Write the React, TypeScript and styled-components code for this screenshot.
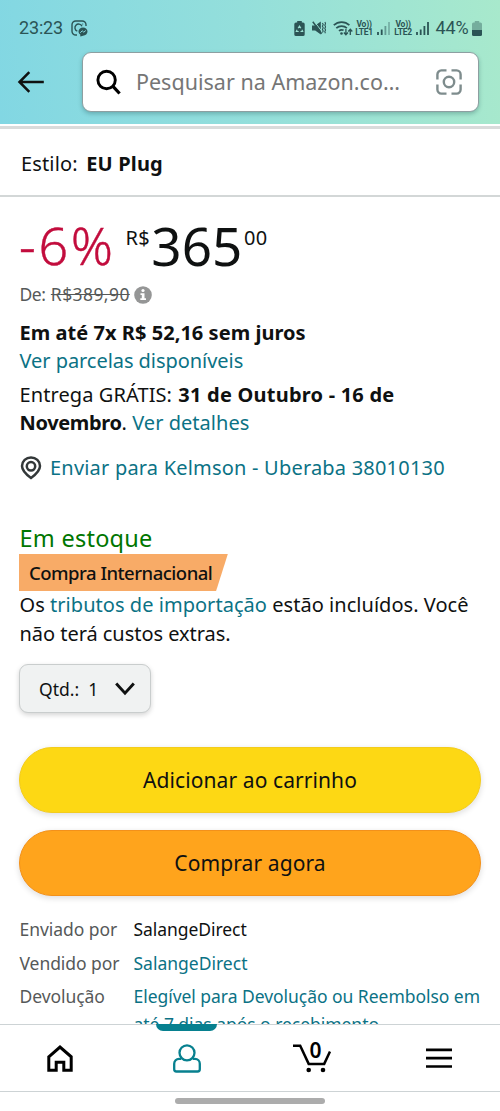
import React from 'react';
import styled, { createGlobalStyle } from 'styled-components';

const Global = createGlobalStyle`
  * { box-sizing: border-box; }
  html, body { margin: 0; background: #fff; }
  body { font-family: "Noto Sans", sans-serif; color: #0f1111; overflow: hidden; }
  button { font: inherit; color: inherit; padding: 0; border: 0; background: none; }
  svg { display: block; flex: none; }
`;

const Screen = styled.div`
  width: 500px;
  height: 1111px;
  display: flex;
  flex-direction: column;
  overflow: hidden;
  background: #fff;
`;

const Header = styled.header`
  height: 124px;
  flex: none;
  background: linear-gradient(82deg, #82d7e3 0%, #94dfdb 50%, #a8e9cc 100%);
`;

const StatusBar = styled.div`
  height: 52.4px;
  padding: 4px 18px 0 19px;
  display: flex;
  align-items: center;
  font: 400 18px/24px Roboto, sans-serif;
  letter-spacing: -0.17px;
  color: #2b5455;
`;

const StatusIcons = styled.div`
  margin-left: auto;
  display: flex;
  align-items: center;
`;

const Carrier = styled.span`
  width: 20px;
  margin: 0 3px;
  display: flex;
  flex-direction: column;
  align-items: center;
  font: 700 8.5px/8.5px Roboto, sans-serif;
  letter-spacing: -0.2px;
  white-space: nowrap;
`;

const Percent = styled.span`
  width: 33px;
  margin: 0 3.4px 0 6.5px;
`;

const SearchRow = styled.div`
  display: flex;
  align-items: center;
  padding: 0 21.5px 0 17px;
`;

const SearchBox = styled.div`
  margin-left: 38.4px;
  flex: 1;
  height: 60px;
  padding: 0 16px 0 13px;
  display: flex;
  align-items: center;
  border: 1px solid #8d9fa1;
  border-radius: 9px;
  background: #fff;
  box-shadow: 0 2px 4px rgba(15, 60, 65, 0.28);
`;

const Placeholder = styled.span`
  margin-left: 13.5px;
  flex: 1;
  font-size: 21.5px;
  letter-spacing: 0.02px;
  line-height: 30px;
  color: #767676;
  white-space: nowrap;
`;

const StyleRow = styled.div`
  height: 71px;
  flex: none;
  margin-top: 2px;
  padding: 20.5px 21px 0;
  border-top: 3px solid #d9dbdb;
  border-bottom: 2px solid #d3d7d7;
  font-size: 20px;
  line-height: 28px;
  letter-spacing: 0.15px;

  b { margin-left: 8.5px; }
`;

const Content = styled.main`
  flex: 1;
  min-height: 0;
  overflow: hidden;
  padding: 21.3px 19.5px 0;
  font-size: 20px;
  line-height: 28.4px;
`;

const PriceRow = styled.div`
  height: 64px;
  display: flex;
  align-items: flex-start;
  line-height: 56px;
`;

const Discount = styled.span`
  width: 106.5px;
  font-weight: 300;
  font-size: 52px;
  letter-spacing: 2.7px;
  margin-left: -0.5px;
  line-height: 54px;
  color: #c20c3d;
  -webkit-text-stroke: 0.4px #c20c3d;
`;

const Whole = styled.span`
  margin: 0 1.5px 0 1.5px;
  font-size: 53px;
  letter-spacing: 0.1px;
`;

const PriceSmall = styled.span`
  margin-top: 6px;
  font-size: 20px;
  line-height: 28px;
  letter-spacing: 0.2px;
`;

const ListPrice = styled.div`
  height: 36.5px;
  display: flex;
  font-size: 17.5px;
  line-height: 24px;
  letter-spacing: -0.5px;
  color: #565959;

  s { margin: 0 4.5px 0 5.5px; letter-spacing: 0.42px; }
  svg { margin-top: 3.5px; }
`;

const Line = styled.div<{ $gap?: number; $ls?: number }>`
  margin-top: ${p => p.$gap ?? 0}px;
  letter-spacing: ${p => p.$ls ?? 0}px;
  white-space: nowrap;
`;

const Strong = styled.b<{ $ls: number; $ml?: number }>`
  margin-left: ${p => p.$ml ?? 0}px;
  letter-spacing: ${p => p.$ls}px;
`;

const Link = styled.span<{ $ls?: number }>`
  color: #0b7285;
  letter-spacing: ${p => p.$ls ?? 0}px;
`;

const Address = styled.div`
  margin-top: 16.2px;
  display: flex;
  align-items: center;
  gap: 8.5px;
  white-space: nowrap;
`;

const Stock = styled.div`
  margin-top: 42.2px;
  height: 29.5px;
  font-size: 23.5px;
  letter-spacing: 0.25px;
  color: #007600;
`;

const Tag = styled.div`
  margin-left: -0.5px;
  width: 209px;
  height: 37.5px;
  padding-left: 10px;
  background: #f8ab67;
  clip-path: polygon(0 0, 100% 0, 94.3% 100%, 0 100%);
  font-weight: 500;
  font-size: 18.5px;
  line-height: 37px;
  letter-spacing: -0.5px;
  white-space: nowrap;
`;

const Quantity = styled.button`
  margin: 16.5px 0 0 -0.5px;
  width: 132px;
  height: 49px;
  display: flex;
  align-items: center;
  padding: 0 15px 0 19px;
  border: 1px solid #c9cdcd;
  border-radius: 9px;
  background: #f0f2f2;
  box-shadow: 0 2px 5px rgba(15, 17, 17, 0.18);
  font-size: 17.5px;
  white-space: pre;

  svg { margin-left: auto; }
`;

const Action = styled.button<{ $bg: string; $edge: string; $gap: number }>`
  display: block;
  width: 462px;
  height: 66px;
  margin: ${p => p.$gap}px 0 0 -0.5px;
  border: 1px solid ${p => p.$edge};
  border-radius: 33px;
  background: ${p => p.$bg};
  box-shadow: 0 2px 6px rgba(15, 17, 17, 0.14);
  font-size: 21px;
  letter-spacing: 0.09px;
`;

const Details = styled.dl`
  margin: 18.5px -10px 0 0;
  display: grid;
  grid-template-columns: 114px 1fr;
  row-gap: 5.7px;
  font-size: 17.5px;
  line-height: 28px;
  letter-spacing: -0.06px;
  white-space: nowrap;

  dt { color: #565959; }
  dd { margin: 0; }
`;

const Nav = styled.nav`
  height: 68px;
  flex: none;
  display: grid;
  grid-template-columns: 120px 133px 118px 129px;
  border-top: 1.5px solid #cdd3d5;
  border-bottom: 1.5px solid #cdd3d5;
  background: #fff;
`;

const NavItem = styled.div`
  position: relative;
  display: flex;
  justify-content: center;
  align-items: center;
`;

const ActiveMark = styled.i`
  position: absolute;
  top: -1px;
  left: 36px;
  width: 61px;
  height: 7px;
  border-radius: 0 0 7px 7px;
  background: #07808f;
`;

const CartCount = styled.span`
  position: absolute;
  left: 56.5px;
  top: 13px;
  font-weight: 600;
  font-size: 21px;
  line-height: 24px;
  color: #000;
`;

const GestureBar = styled.div`
  height: 19px;
  flex: none;
  display: flex;
  justify-content: center;
  padding-top: 6px;

  i { width: 150px; height: 6px; border-radius: 3px; background: #acacac; }
`;

const Signal = ({ weak }: { weak?: boolean }) => (
  <svg width="13" height="14" viewBox="0 0 13 14" stroke="currentColor" strokeWidth="1.8">
    <path d="M1 14v-3M4.700 14V8.500" />
    <path d="M8.400 14V5" opacity={weak ? 0.5 : 1} />
    <path d="M12 14V1" opacity={weak ? 0.35 : 1} />
  </svg>
);

export default function App() {
  return (
    <Screen>
      <Global />
      <Header>
        <StatusBar>
          <span>23:23</span>
          <svg style={{ marginLeft: 8 }} width="17" height="17" viewBox="0 0 17 17" fill="none" stroke="currentColor" strokeWidth="1.4">
            <path d="M6 15H4.800A3.800 3.800 0 0 1 1 11.200V4.800A3.800 3.800 0 0 1 4.800 1h6.400A3.800 3.800 0 0 1 15 4.800V6" />
            <path d="M11 6.200a3.700 3.700 0 1 0-4.700 5" />
            <circle cx="11.700" cy="4" r=".6" fill="currentColor" stroke="none" />
            <path d="M12 7.500c2.600 0 4.500 1.800 4.500 4.100s-1.900 4.100-4.500 4.100l-2.700.8v-1.900C8.200 13.900 7.500 12.900 7.500 11.600 7.500 9.300 9.400 7.500 12 7.500z" fill="currentColor" stroke="none" />
            <path d="M9.300 12.800l1.900-2 1.600 1.400 2-1.700" stroke="#86d9e1" strokeWidth="1" />
          </svg>
          <StatusIcons>
            <svg width="11" height="15" viewBox="0 0 11 15">
              <path d="M3.200 0h4.600v1.500H9A1.700 1.700 0 0 1 10.700 3.200v10A1.700 1.700 0 0 1 9 15H2A1.700 1.700 0 0 1 .3 13.200v-10A1.700 1.700 0 0 1 2 1.500h1.200z" fill="currentColor" />
              <path d="M4.100 7.300l1.400-2.300 1.400 2.300M7.900 8.800l.8 1.700H6.500M4.700 10.500H2.300l.8-1.700" fill="none" stroke="#9ce3d5" strokeWidth="1.100" />
            </svg>
            <svg style={{ marginLeft: 7.5 }} width="14" height="14" viewBox="0 0 14 14" fill="none" stroke="currentColor">
              <path d="M0 4.500h3.200L8.800.6v12.800L3.200 9.500H0z" fill="currentColor" stroke="none" />
              <path d="M2 .2l8.500 11" stroke="#9ce3d5" strokeWidth="1" />
              <path d="M.8.700l8.800 12" strokeWidth="1.500" />
              <path d="M10.400 2l.8 1.600-.8 1.600.8 1.600-.8 1.600.8 1.600-.8 1.600M12.900 1l.7 1.600-.8 1.600.8 1.600-.8 1.600.8 1.600-.8 1.600.6 1.700" strokeWidth="1.100" />
            </svg>
            <svg style={{ marginLeft: 7 }} width="20" height="16" viewBox="0 0 20 16" fill="none" stroke="currentColor" strokeWidth="1.700">
              <path d="M.8 5.200a11.300 11.300 0 0 1 15.600 0M3.300 8.200a7.600 7.600 0 0 1 10.600 0M6 11a4 4 0 0 1 4.600-.7" />
              <circle cx="8.500" cy="13.500" r="1.300" fill="currentColor" stroke="none" />
              <path d="M12.900 9v5.500M10.900 12.500l2 2.200 2-2.200M17.300 15V9.500M15.300 11.500l2-2.200 2 2.200" strokeWidth="1.300" />
            </svg>
            <Carrier style={{ marginLeft: 1 }}><span>Vo))</span><span>LTE1</span></Carrier>
            <Signal weak />
            <Carrier><span>Vo))</span><span>LTE2</span></Carrier>
            <Signal />
            <Percent>44%</Percent>
            <svg width="10" height="15" viewBox="0 0 10 15" fill="currentColor">
              <path d="M2.800 0h4.400v1.500H8.500A1.500 1.500 0 0 1 10 3v6H0V3a1.500 1.500 0 0 1 1.500-1.500h1.300z" opacity=".4" />
              <path d="M0 9h10v4.500A1.500 1.500 0 0 1 8.500 15h-7A1.500 1.500 0 0 1 0 13.500z" />
            </svg>
          </StatusIcons>
        </StatusBar>
        <SearchRow>
          <svg width="27" height="24" viewBox="0 0 27 24" fill="none" stroke="#0f1111" strokeWidth="2.500">
            <path d="M26.800 12H2.500M12.300 2.200L2.500 12l9.800 9.800" />
          </svg>
          <SearchBox>
            <svg width="26" height="26" viewBox="0 0 26 26" fill="none" stroke="#000" strokeWidth="2.900">
              <circle cx="10.600" cy="11" r="8.700" />
              <path d="M16.800 17.200l6.800 7.300" strokeWidth="3.200" />
            </svg>
            <Placeholder>Pesquisar na Amazon.co…</Placeholder>
            <svg width="26" height="26" viewBox="0 0 26 26" fill="none" stroke="#7e8c8d" strokeWidth="2.400">
              <path d="M1.400 10.500V5.400a4 4 0 0 1 4-4h5.100M15.500 1.400h5.100a4 4 0 0 1 4 4v5.100M24.600 15.500v5.100a4 4 0 0 1-4 4h-5.100M10.500 24.600H5.400a4 4 0 0 1-4-4v-5.100" />
              <circle cx="13" cy="13" r="5.200" />
            </svg>
          </SearchBox>
        </SearchRow>
      </Header>

      <StyleRow>Estilo:<b>EU Plug</b></StyleRow>

      <Content>
        <PriceRow>
          <Discount>-6%</Discount>
          <PriceSmall>R$</PriceSmall>
          <Whole>365</Whole>
          <PriceSmall>00</PriceSmall>
        </PriceRow>
        <ListPrice>
          De:<s>R$389,90</s>
          <svg width="18" height="18" viewBox="0 0 18 18">
            <circle cx="9" cy="9" r="8.800" fill="#959696" />
            <path d="M6.500 7.300h4v5H12v1.600H6.300v-1.600h1.500V8.900H6.500z" fill="#fff" />
            <circle cx="9" cy="4.500" r="1.600" fill="#fff" />
          </svg>
        </ListPrice>
        <Line $ls={0.04}><b>Em até 7x R$ 52,16 sem juros</b></Line>
        <Line $gap={-0.4}><Link $ls={-0.05}>Ver parcelas disponíveis</Link></Line>
        <Line $gap={5.3} $ls={0.09}>Entrega GRÁTIS: <Strong $ls={0.22} $ml={1}>31 de Outubro - 16 de</Strong></Line>
        <Line><Strong $ls={-0.35}>Novembro</Strong>. <Link $ls={0.04}>Ver detalhes</Link></Line>
        <Address>
          <svg width="22" height="24" viewBox="0 0 22 24" fill="none" stroke="#333839" strokeWidth="2.500">
            <path d="M11 22C8 19.800 2 15.300 2 10a9 8.600 0 0 1 18 0c0 5.300-6 9.800-9 12z" />
            <circle cx="11" cy="10.300" r="4.200" />
          </svg>
          <Link $ls={0.2}>Enviar para Kelmson - Uberaba 38010130</Link>
        </Address>
        <Stock>Em estoque</Stock>
        <Tag>Compra Internacional</Tag>
        <Line $ls={0.04}>Os <Link $ls={0.04}>tributos de importação</Link> estão incluídos. Você</Line>
        <Line $ls={-0.04}>não terá custos extras.</Line>
        <Quantity>
          {'Qtd.:  1'}
          <svg width="20" height="14" viewBox="0 0 20 14" fill="none" stroke="#0f1111" strokeWidth="2.900">
            <path d="M1.200 1.500L10 11.200l8.800-9.700" />
          </svg>
        </Quantity>
        <Action $bg="#fdd814" $edge="#f3cc1c" $gap={34}>Adicionar ao carrinho</Action>
        <Action $bg="#ffa41c" $edge="#f3911a" $gap={17}>Comprar agora</Action>
        <Details>
          <dt>Enviado por</dt><dd>SalangeDirect</dd>
          <dt>Vendido por</dt><dd><Link>SalangeDirect</Link></dd>
          <dt>Devolução</dt>
          <dd><Link $ls={-0.04}>Elegível para Devolução ou Reembolso em<br />até 7 dias após o recebimento</Link></dd>
        </Details>
      </Content>

      <Nav>
        <NavItem>
          <svg width="26" height="27" viewBox="0 0 26 27" fill="none" stroke="#000" strokeWidth="3">
            <path d="M1.800 11.800L13 2l11.200 9.800v13.500h-7.400v-8H9.200v8H1.800z" />
          </svg>
        </NavItem>
        <NavItem>
          <ActiveMark />
          <svg width="28" height="29" viewBox="0 0 28 29" fill="none" stroke="#07808f" strokeWidth="2.300">
            <circle cx="14" cy="8.800" r="7.500" />
            <path d="M8.200 14.900H6a4.800 4.800 0 0 0-4.800 4.800v5.600a2.200 2.200 0 0 0 2.200 2.200h21.200a2.200 2.200 0 0 0 2.200-2.200v-5.600a4.800 4.800 0 0 0-4.800-4.800h-2.200" />
          </svg>
        </NavItem>
        <NavItem>
          <svg width="38" height="30" viewBox="0 0 38 30" fill="none" stroke="#000" strokeWidth="2.500">
            <path d="M0 2.700h7.200l8.500 18.200h15.500L37 8.500" />
            <circle cx="15.700" cy="27" r="2.300" fill="#000" stroke="none" />
            <circle cx="30" cy="27" r="2.300" fill="#000" stroke="none" />
          </svg>
          <CartCount>0</CartCount>
        </NavItem>
        <NavItem style={{ paddingLeft: 7 }}>
          <svg width="26" height="22" viewBox="0 0 26 22" stroke="#000" strokeWidth="2.700">
            <path d="M0 2.800h26M0 11.200h26M0 19.500h26" />
          </svg>
        </NavItem>
      </Nav>
      <GestureBar><i /></GestureBar>
    </Screen>
  );
}
